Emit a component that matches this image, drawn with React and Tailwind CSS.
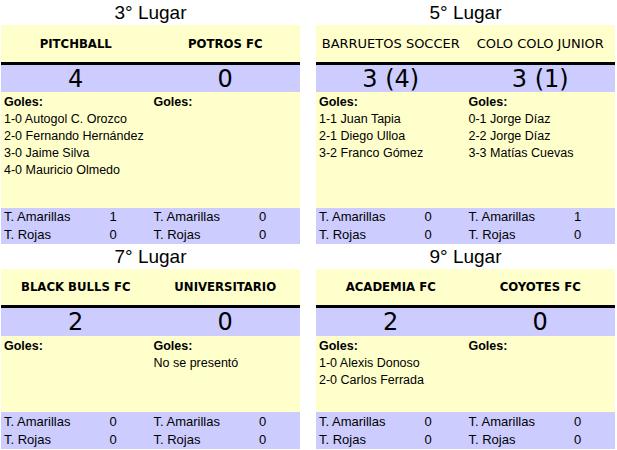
import React from "react";

const matches = [
  {
    title: "3° Lugar",
    home: { name: "PITCHBALL", bold: true, score: "4", goals: ["1-0 Autogol C. Orozco", "2-0 Fernando Hernández", "3-0 Jaime Silva", "4-0 Mauricio Olmedo"], am: "1", ro: "0" },
    away: { name: "POTROS FC", bold: true, score: "0", goals: [], am: "0", ro: "0" },
  },
  {
    title: "5° Lugar",
    home: { name: "BARRUETOS SOCCER", bold: false, score: "3 (4)", goals: ["1-1 Juan Tapia", "2-1 Diego Ulloa", "3-2 Franco Gómez"], am: "0", ro: "0" },
    away: { name: "COLO COLO JUNIOR", bold: false, score: "3 (1)", goals: ["0-1 Jorge Díaz", "2-2 Jorge Díaz", "3-3 Matías Cuevas"], am: "1", ro: "0" },
  },
  {
    title: "7° Lugar",
    home: { name: "BLACK BULLS FC", bold: true, score: "2", goals: [], am: "0", ro: "0" },
    away: { name: "UNIVERSITARIO", bold: true, score: "0", goals: ["No se presentó"], am: "0", ro: "0" },
  },
  {
    title: "9° Lugar",
    home: { name: "ACADEMIA FC", bold: true, score: "2", goals: ["1-0 Alexis Donoso", "2-0 Carlos Ferrada"], am: "0", ro: "0" },
    away: { name: "COYOTES FC", bold: true, score: "0", goals: [], am: "0", ro: "0" },
  },
];

const arial = { fontFamily: "'Liberation Sans', Arial, sans-serif" };
const verd = { fontFamily: "'DejaVu Sans', Verdana, sans-serif" };
const tahB = { fontFamily: "'DejaVu Sans Condensed', 'DejaVu Sans', Tahoma, sans-serif", fontStretch: "condensed" };

function TeamName({ t }) {
  return (
    <div className="flex-1 flex items-center justify-center">
      {t.bold ? (
        <span className="text-[13px] font-bold text-black" style={tahB}>{t.name}</span>
      ) : (
        <span className="text-[13px] text-black" style={verd}>{t.name}</span>
      )}
    </div>
  );
}

function Goals({ t }) {
  return (
    <div className="flex-1 pl-[3px] pt-[2px] text-[12.5px] leading-[17px] text-black" style={arial}>
      <div className="font-bold">Goles:</div>
      {t.goals.map((g, i) => (
        <div key={i}>{g}</div>
      ))}
    </div>
  );
}

function Stats({ t }) {
  return (
    <div className="flex-1 flex flex-col text-[13px] text-black" style={arial}>
      <div className="flex h-[18px] items-center">
        <div className="w-[96px] pl-[3px]">T. Amarillas</div>
        <div className="w-[32px] text-center">{t.am}</div>
      </div>
      <div className="flex h-[18px] items-center">
        <div className="w-[96px] pl-[3px]">T. Rojas</div>
        <div className="w-[32px] text-center">{t.ro}</div>
      </div>
    </div>
  );
}

function Card({ m, top }) {
  return (
    <div className="flex flex-col">
      <div className="h-[25px] flex items-center justify-center text-[19px] text-black pt-[2px]" style={arial}>
        {m.title}
      </div>
      <div className={"flex bg-[#ffffcc] " + (top ? "h-[37px]" : "h-[36px]")}>
        <TeamName t={m.home} />
        <TeamName t={m.away} />
      </div>
      <div className="h-[3px] bg-black" />
      <div className={"flex bg-[#ccccff] " + (top ? "h-[27px]" : "h-[28px]")}>
        {[m.home, m.away].map((t, i) => (
          <div key={i} className="flex-1 flex items-center justify-center text-[24px] leading-none text-black" style={verd}>
            {t.score}
          </div>
        ))}
      </div>
      <div className={"flex bg-[#ffffcc] " + (top ? "h-[116px]" : "h-[76px]")}>
        <Goals t={m.home} />
        <Goals t={m.away} />
      </div>
      <div className={"flex bg-[#ccccff] items-center " + (top ? "h-[36px]" : "h-[37px]")}>
        <Stats t={m.home} />
        <Stats t={m.away} />
      </div>
    </div>
  );
}

export default function App() {
  return (
    <div className="w-[617px] h-[450px] bg-white pl-[1px]">
      <div className="grid grid-cols-[299px_299px] gap-x-[16px]">
        {matches.map((m, i) => (
          <Card key={i} m={m} top={i < 2} />
        ))}
      </div>
    </div>
  );
}
